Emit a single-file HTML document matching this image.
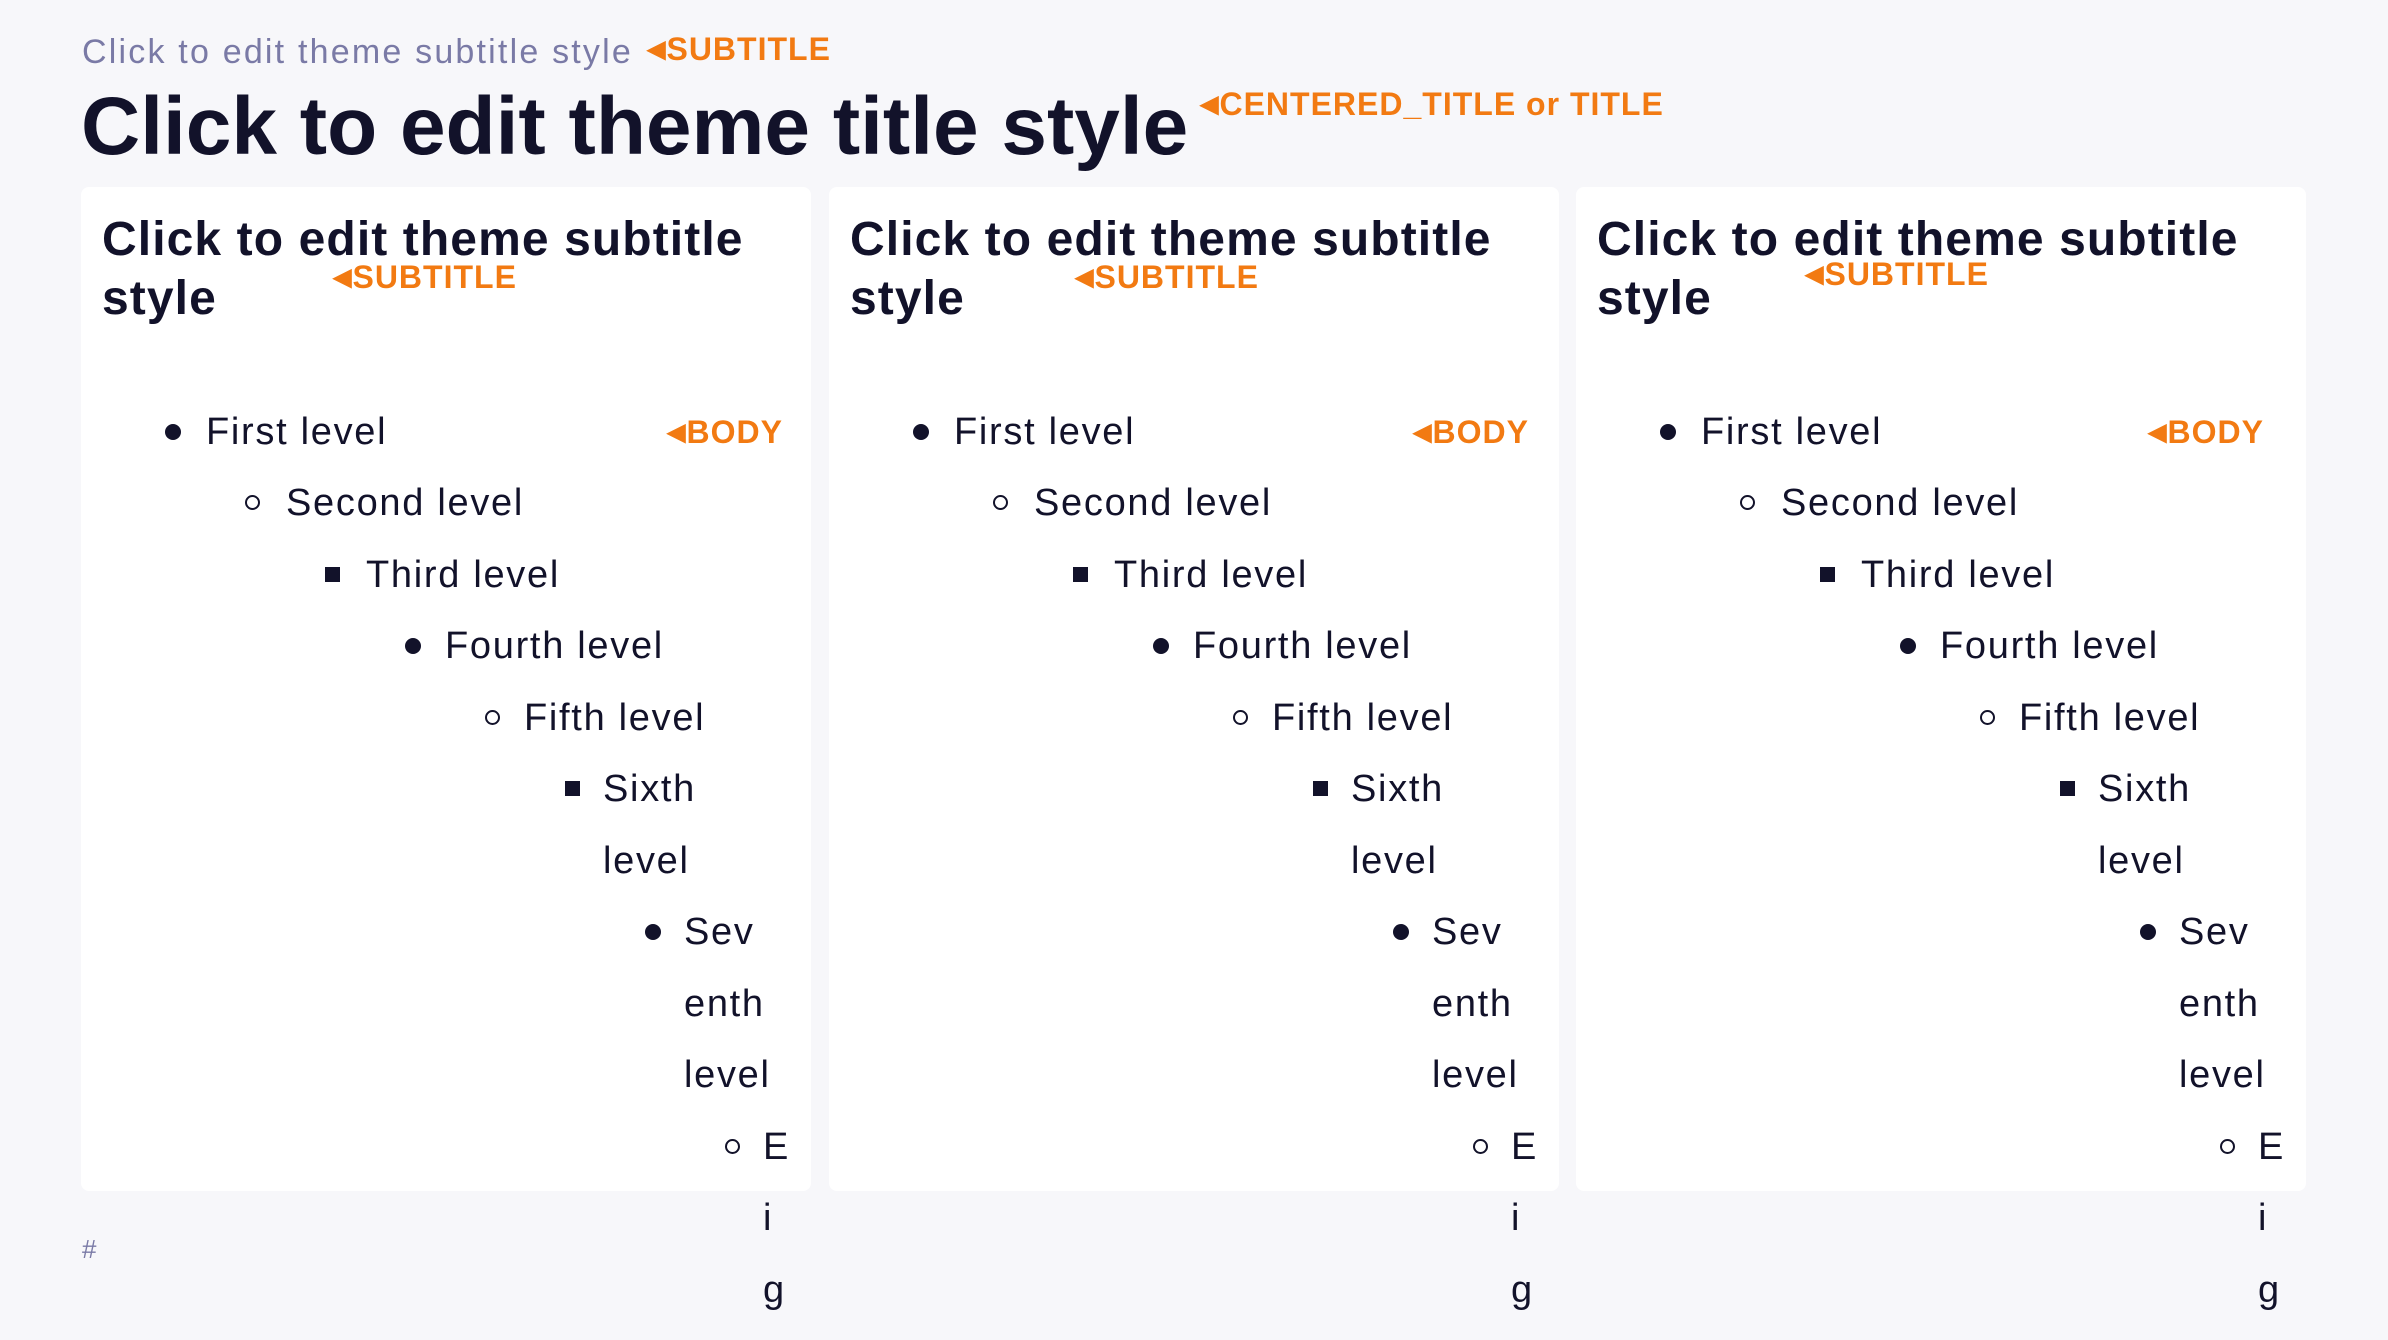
<!DOCTYPE html>
<html><head><meta charset="utf-8"><style>
*{margin:0;padding:0;box-sizing:border-box}
html,body{width:2388px;height:1340px;background:#f7f7fa;overflow:hidden;font-family:"Liberation Sans",sans-serif;color:#12122a}
.a{position:absolute;white-space:nowrap}
.sub{left:82px;top:35px;font-size:34px;line-height:34px;color:#7a7aa6;letter-spacing:2.2px}
.ttl{left:81px;top:86px;font-size:82px;line-height:82px;font-weight:bold;letter-spacing:0}
.lab{font-size:32px;line-height:32px;font-weight:bold;color:#f27a12;letter-spacing:1px}
.lab i{font-style:normal;font-size:24px;letter-spacing:0;vertical-align:3px;margin-right:1px}
.card{position:absolute;top:187px;width:730px;height:1004px;background:#fff;border-radius:8px}
.cs{position:absolute;left:21px;top:23px;font-size:48px;line-height:59px;font-weight:bold;width:710px;white-space:normal;letter-spacing:1.1px}
.l{position:absolute;font-size:38px;line-height:38px;white-space:nowrap;letter-spacing:1.7px}
.b{position:absolute}
.d{width:16px;height:16px;border-radius:50%;background:#12122a}
.c{width:15px;height:15px;border-radius:50%;border:2px solid #12122a}
.s{width:15px;height:15px;background:#12122a}
.hash{left:82px;top:1236px;font-size:26px;line-height:26px;color:#7a7aa6}
</style></head><body>
<div class="a sub">Click to edit theme subtitle style</div>
<div class="a lab" style="left:647px;top:33px"><i>◀</i>SUBTITLE</div>
<div class="a ttl">Click to edit theme title style</div>
<div class="a lab" style="left:1200px;top:88px"><i>◀</i>CENTERED_TITLE or TITLE</div>

<div class="card" style="left:81px">
<div class="cs">Click to edit theme subtitle style</div>
<div class="a lab" style="left:252px;top:74px"><i>◀</i>SUBTITLE</div>
<div class="a lab" style="left:586px;top:229px"><i>◀</i>BODY</div>
<div class="b d" style="left:84px;top:237px"></div><div class="l" style="left:125px;top:226px">First level</div>
<div class="b c" style="left:164px;top:308px"></div><div class="l" style="left:205px;top:297px">Second level</div>
<div class="b s" style="left:244px;top:380px"></div><div class="l" style="left:285px;top:369px">Third level</div>
<div class="b d" style="left:324px;top:451px"></div><div class="l" style="left:364px;top:440px">Fourth level</div>
<div class="b c" style="left:404px;top:523px"></div><div class="l" style="left:443px;top:512px">Fifth level</div>
<div class="b s" style="left:484px;top:594px"></div><div class="l" style="left:522px;top:583px">Sixth</div>
<div class="l" style="left:522px;top:655px">level</div>
<div class="b d" style="left:564px;top:737px"></div><div class="l" style="left:603px;top:726px">Sev</div>
<div class="l" style="left:603px;top:798px">enth</div>
<div class="l" style="left:603px;top:869px">level</div>
<div class="b c" style="left:644px;top:952px"></div><div class="l" style="left:682px;top:941px">E</div>
<div class="l" style="left:682px;top:1012px">i</div>
<div class="l" style="left:682px;top:1084px">g</div>
</div>

<div class="card" style="left:829px">
<div class="cs">Click to edit theme subtitle style</div>
<div class="a lab" style="left:246px;top:74px"><i>◀</i>SUBTITLE</div>
<div class="a lab" style="left:584px;top:229px"><i>◀</i>BODY</div>
<div class="b d" style="left:84px;top:237px"></div><div class="l" style="left:125px;top:226px">First level</div>
<div class="b c" style="left:164px;top:308px"></div><div class="l" style="left:205px;top:297px">Second level</div>
<div class="b s" style="left:244px;top:380px"></div><div class="l" style="left:285px;top:369px">Third level</div>
<div class="b d" style="left:324px;top:451px"></div><div class="l" style="left:364px;top:440px">Fourth level</div>
<div class="b c" style="left:404px;top:523px"></div><div class="l" style="left:443px;top:512px">Fifth level</div>
<div class="b s" style="left:484px;top:594px"></div><div class="l" style="left:522px;top:583px">Sixth</div>
<div class="l" style="left:522px;top:655px">level</div>
<div class="b d" style="left:564px;top:737px"></div><div class="l" style="left:603px;top:726px">Sev</div>
<div class="l" style="left:603px;top:798px">enth</div>
<div class="l" style="left:603px;top:869px">level</div>
<div class="b c" style="left:644px;top:952px"></div><div class="l" style="left:682px;top:941px">E</div>
<div class="l" style="left:682px;top:1012px">i</div>
<div class="l" style="left:682px;top:1084px">g</div>
</div>

<div class="card" style="left:1576px">
<div class="cs">Click to edit theme subtitle style</div>
<div class="a lab" style="left:229px;top:71px"><i>◀</i>SUBTITLE</div>
<div class="a lab" style="left:572px;top:229px"><i>◀</i>BODY</div>
<div class="b d" style="left:84px;top:237px"></div><div class="l" style="left:125px;top:226px">First level</div>
<div class="b c" style="left:164px;top:308px"></div><div class="l" style="left:205px;top:297px">Second level</div>
<div class="b s" style="left:244px;top:380px"></div><div class="l" style="left:285px;top:369px">Third level</div>
<div class="b d" style="left:324px;top:451px"></div><div class="l" style="left:364px;top:440px">Fourth level</div>
<div class="b c" style="left:404px;top:523px"></div><div class="l" style="left:443px;top:512px">Fifth level</div>
<div class="b s" style="left:484px;top:594px"></div><div class="l" style="left:522px;top:583px">Sixth</div>
<div class="l" style="left:522px;top:655px">level</div>
<div class="b d" style="left:564px;top:737px"></div><div class="l" style="left:603px;top:726px">Sev</div>
<div class="l" style="left:603px;top:798px">enth</div>
<div class="l" style="left:603px;top:869px">level</div>
<div class="b c" style="left:644px;top:952px"></div><div class="l" style="left:682px;top:941px">E</div>
<div class="l" style="left:682px;top:1012px">i</div>
<div class="l" style="left:682px;top:1084px">g</div>
</div>

<div class="a hash">#</div>
</body></html>
